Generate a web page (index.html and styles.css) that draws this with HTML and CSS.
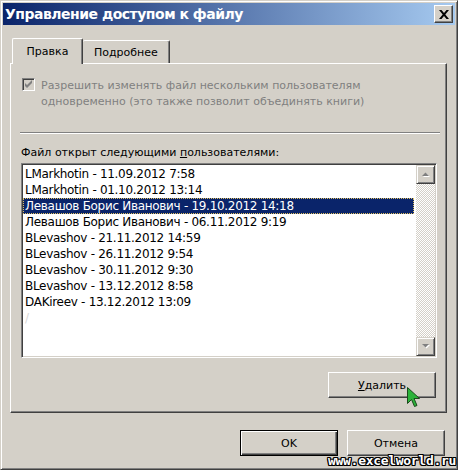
FILE: index.html
```html
<!DOCTYPE html>
<html lang="ru">
<head>
    <meta charset="UTF-8">
    <meta name="viewport" content="width=device-width, initial-scale=1.0">
    <title>Управление доступом к файлу</title>
    <link rel="stylesheet" href="styles.css">
</head>
<body>
    <div class="window">
        <div class="titlebar">
            <span class="title">Управление доступом к файлу</span>
            <button class="close-btn">
                <svg width="10" height="9" viewBox="0 0 10 9">
                    <path d="M0 0h2.5l2.5 3 2.5-3H10L6.3 4.5 10 9H7.5L5 6 2.5 9H0l3.7-4.5z" fill="#000"/>
                </svg>
            </button>
        </div>

        <div class="dialog-body">
            <div class="tabs">
                <div class="tab tab-active">Правка</div>
                <div class="tab">Подробнее</div>
            </div>

            <div class="tab-panel">
                <div class="option">
                    <span class="checkbox">
                        <svg width="9" height="9" viewBox="0 0 9 9">
                            <path d="M1 3v3l2 2 5-5V0L3 5z" fill="#808080"/>
                        </svg>
                    </span>
                    <span class="option-text">Разрешить изменять файл нескольким пользователям<br>одновременно (это также позволит объединять книги)</span>
                </div>

                <div class="separator"></div>

                <div class="list-label">Файл открыт следующими <u>п</u>ользователями:</div>

                <div class="listbox">
                    <ul class="user-list">
                        <li class="user-item">LMarkhotin - 11.09.2012 7:58</li>
                        <li class="user-item">LMarkhotin - 01.10.2012 13:14</li>
                        <li class="user-item selected">Левашов Борис Иванович - 19.10.2012 14:18</li>
                        <li class="user-item">Левашов Борис Иванович - 06.11.2012 9:19</li>
                        <li class="user-item">BLevashov - 21.11.2012 14:59</li>
                        <li class="user-item">BLevashov - 26.11.2012 9:54</li>
                        <li class="user-item">BLevashov - 30.11.2012 9:30</li>
                        <li class="user-item">BLevashov - 13.12.2012 8:58</li>
                        <li class="user-item">DAKireev - 13.12.2012 13:09</li>
                        <li class="user-item ghost">/</li>
                    </ul>
                    <div class="scrollbar">
                        <div class="scroll-btn">
                            <svg width="8" height="5" viewBox="0 0 8 5">
                                <path d="M1 5h7L4.5 1.5z" fill="#fff"/>
                                <path d="M0 4h7L3.5 0.5z" fill="#808080"/>
                            </svg>
                        </div>
                        <div class="scroll-track"></div>
                        <div class="scroll-btn">
                            <svg width="8" height="5" viewBox="0 0 8 5">
                                <path d="M1 1h7L4.5 4.5z" fill="#fff"/>
                                <path d="M0 0h7L3.5 3.5z" fill="#808080"/>
                            </svg>
                        </div>
                    </div>
                </div>

                <div class="panel-actions">
                    <button class="btn btn-delete"><u>У</u>далить</button>
                </div>
            </div>

            <div class="dialog-actions">
                <button class="btn btn-default">OK</button>
                <button class="btn">Отмена</button>
            </div>
        </div>

        <!-- курсор и подпись поверх окна -->
        <svg class="cursor" width="13" height="21" viewBox="0 0 13 21">
            <path d="M0.5 0.5v16l4-4 3 7 2.5-1-3-7h5.5z" fill="#2bb33a" stroke="#1c4a1c" stroke-width="1"/>
        </svg>
        <div class="watermark">www.excelworld.ru</div>
    </div>
</body>
</html>
```

FILE: styles.css
```css
* {
    margin: 0;
    padding: 0;
    box-sizing: border-box;
}

body {
    background-color: #d4d0c8;
    font-family: 'DejaVu Sans', 'Liberation Sans', sans-serif;
    font-size: 11px;
    color: #000;
}

.window {
    position: relative;
    width: 458px;
    height: 470px;
    background-color: #d4d0c8;
    border: 1px solid;
    border-color: #d4d0c8 #404040 #404040 #d4d0c8;
    box-shadow: inset 1px 1px 0 #fff, inset -1px -1px 0 #808080;
    padding: 2px;
    overflow: hidden;
}

.titlebar {
    height: 22px;
    display: flex;
    align-items: center;
    justify-content: space-between;
    padding: 0 2px 0 2px;
    background: linear-gradient(to right, #0a246a, #a6caf0);
}

.title {
    color: #fff;
    font-weight: bold;
    font-size: 14px;
    letter-spacing: -0.5px;
    white-space: nowrap;
}

.close-btn {
    width: 19px;
    height: 18px;
    display: flex;
    align-items: center;
    justify-content: center;
    background-color: #d4d0c8;
    border: 1px solid;
    border-color: #fff #404040 #404040 #fff;
    box-shadow: inset -1px -1px 0 #808080;
}

.dialog-body {
    padding: 13px 8px 0 7px;
}

.tabs {
    display: flex;
    align-items: flex-end;
    padding-left: 2px;
    height: 25px;
}

.tab {
    height: 23px;
    padding: 0 11px;
    display: flex;
    align-items: center;
    background-color: #d4d0c8;
    border-top: 1px solid #fff;
    border-right: 1px solid #404040;
    box-shadow: inset -1px 0 0 #808080;
    border-radius: 2px 2px 0 0;
    white-space: nowrap;
}

.tab-active {
    position: relative;
    z-index: 1;
    height: 26px;
    margin-bottom: -1px;
    width: 71px;
    justify-content: center;
    border-left: 1px solid #fff;
}

.tab-panel {
    height: 350px;
    padding: 14px 9px 0 10px;
    border: 1px solid;
    border-color: #fff #404040 #404040 #fff;
    box-shadow: inset -1px -1px 0 #808080;
}

.option {
    display: flex;
    align-items: flex-start;
}

.checkbox {
    width: 13px;
    height: 13px;
    margin-left: 1px;
    display: flex;
    align-items: center;
    justify-content: center;
    border: 1px solid;
    border-color: #808080 #fff #fff #808080;
    box-shadow: inset 1px 1px 0 #404040, inset -1px -1px 0 #d4d0c8;
    background-color: #d4d0c8;
}

.option-text {
    margin-left: 6px;
    line-height: 16px;
    color: #808080;
}

.separator {
    margin: 22px -3px 0 -1px;
    height: 2px;
    border-top: 1px solid #808080;
    border-bottom: 1px solid #fff;
}

.list-label {
    margin-top: 11px;
    line-height: 16px;
}

.listbox {
    margin-top: 2px;
    height: 195px;
    display: flex;
    background-color: #fff;
    border: 1px solid;
    border-color: #808080 #fff #fff #808080;
    box-shadow: inset 1px 1px 0 #404040, inset -1px -1px 0 #d4d0c8;
    padding: 1px;
}

.user-list {
    flex: 1;
    list-style-type: none;
    padding-top: 1px;
    font-size: 12px;
    letter-spacing: -0.3px;
}

.user-item {
    height: 16px;
    line-height: 16px;
    padding-left: 2px;
    margin-right: 2px;
    white-space: nowrap;
}

.user-item.selected {
    background-color: #0a246a;
    color: #fff;
    outline: 1px dotted #e0c060;
    outline-offset: -1px;
}

.user-item.ghost {
    color: #d8d8d8;
}

.scrollbar {
    width: 19px;
    display: flex;
    flex-direction: column;
}

.scroll-btn {
    height: 19px;
    display: flex;
    align-items: center;
    justify-content: center;
    background-color: #d4d0c8;
    border: 1px solid;
    border-color: #d4d0c8 #404040 #404040 #d4d0c8;
    box-shadow: inset 1px 1px 0 #fff, inset -1px -1px 0 #808080;
}

.scroll-track {
    flex: 1;
    background-image: repeating-conic-gradient(#d4d0c8 0 25%, #fff 0 50%);
    background-size: 2px 2px;
}

.panel-actions {
    display: flex;
    justify-content: flex-end;
    margin-top: 14px;
    padding-right: 1px;
}

.btn {
    height: 26px;
    width: 98px;
    font-family: 'DejaVu Sans', 'Liberation Sans', sans-serif;
    font-size: 11px;
    color: #000;
    background-color: #d4d0c8;
    border: 1px solid;
    border-color: #fff #404040 #404040 #fff;
    box-shadow: inset -1px -1px 0 #808080;
}

.btn u {
    text-decoration: underline;
}

.btn-delete {
    width: 108px;
}

.btn-default {
    border: 1px solid #000;
    box-shadow: inset 1px 1px 0 #fff, inset -1px -1px 0 #404040, inset -2px -2px 0 #808080;
}

.dialog-actions {
    display: flex;
    justify-content: flex-end;
    gap: 9px;
    margin-top: 17px;
    padding-right: 2px;
}

.cursor {
    position: absolute;
    left: 406px;
    top: 386px;
}

.watermark {
    position: absolute;
    right: 1px;
    bottom: 1px;
    font-family: 'DejaVu Sans Mono', 'Liberation Mono', monospace;
    font-weight: bold;
    font-size: 13px;
    letter-spacing: -0.3px;
    color: #fff;
    text-shadow: 1px 0 0 #000, -1px 0 0 #000, 0 1px 0 #000, 0 -1px 0 #000,
        1px 1px 0 #000, -1px -1px 0 #000, 1px -1px 0 #000, -1px 1px 0 #000;
}
```
